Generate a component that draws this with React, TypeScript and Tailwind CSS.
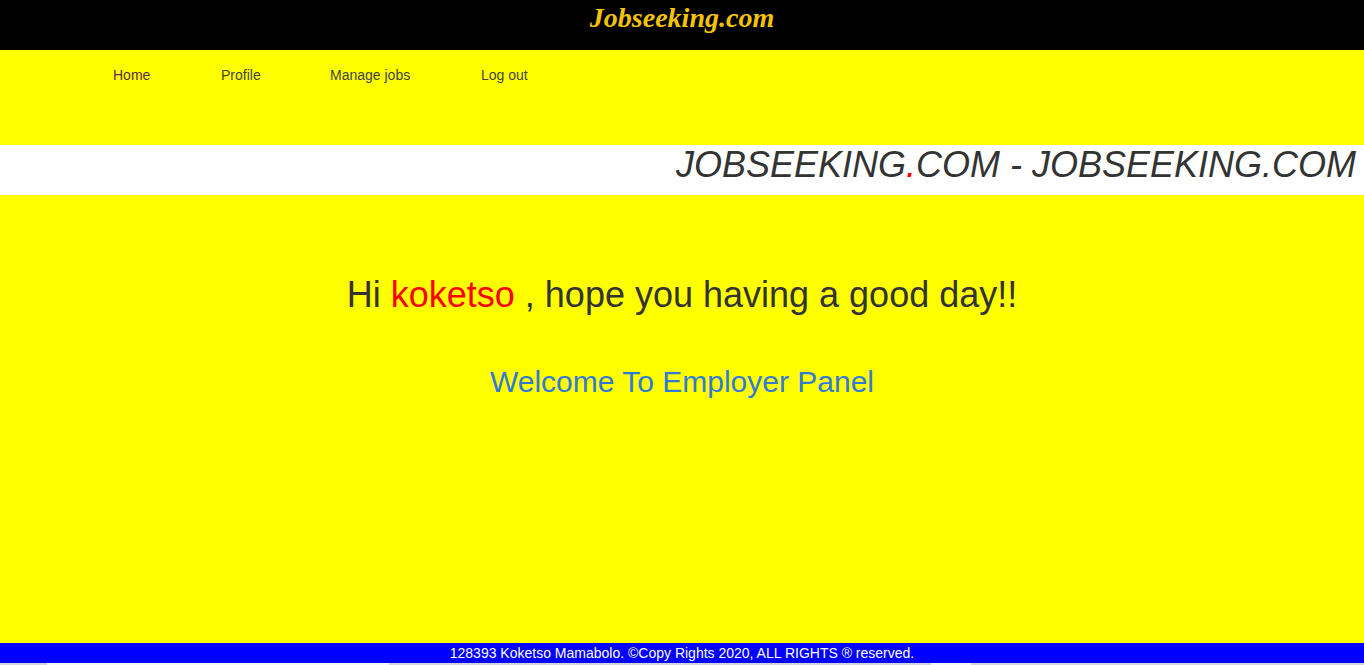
import React from 'react';

const navLinks = [
  { label: 'Home', className: 'text-[#5b2d4c]' },
  { label: 'Profile', className: 'text-[#444]' },
  { label: 'Manage jobs', className: 'text-[#444]' },
  { label: 'Log out', className: 'text-[#444]' },
];

const App: React.FC = () => {
  return (
    <div className="w-full h-[665px] flex flex-col bg-[#ffff00] font-['Liberation_Sans',Arial,sans-serif] overflow-hidden">
      {/* Brand header */}
      <header className="h-[50px] flex-shrink-0 bg-black flex justify-center">
        <h1 className="mt-[1px] text-[28px] leading-[34px] italic font-bold text-[#f5c400] font-['Liberation_Serif','Times_New_Roman',serif]">
          Jobseeking.com
        </h1>
      </header>

      {/* Nav */}
      <nav className="h-[95px] flex-shrink-0 flex items-start pl-[113px] pt-[17px] text-[14px] leading-[16px]">
        {navLinks.map((link, i) => (
          <a
            key={link.label}
            href="#"
            className={`${link.className} ${i === 0 ? 'w-[108px]' : i === 1 ? 'w-[109px]' : i === 2 ? 'w-[151px]' : ''}`}
          >
            {link.label}
          </a>
        ))}
      </nav>

      {/* Marquee strip */}
      <div className="h-[50px] flex-shrink-0 bg-white flex items-start justify-end pt-[0px] pr-[8px] overflow-hidden whitespace-nowrap">
        <span className="text-[36px] leading-[40px] italic text-[#333]">
          JOBSEEKING<span className="text-[#ff0000]">.</span>COM - JOBSEEKING.COM
        </span>
      </div>

      {/* Main */}
      <main className="flex-grow flex flex-col items-center">
        <h2 className="mt-[78px] text-[36px] leading-[44px] text-[#333]">
          Hi <span className="text-[#ff0000]">koketso</span> , hope you having a good day!!
        </h2>
        <h3 className="mt-[47px] text-[30px] leading-[36px] text-[#337ad4]">
          Welcome To Employer Panel
        </h3>
      </main>

      {/* Footer */}
      <footer className="h-[20px] flex-shrink-0 bg-[#0000ff] flex items-center justify-center">
        <p className="text-[14px] leading-[16px] text-white">
          128393 Koketso Mamabolo. ©Copy Rights 2020, ALL RIGHTS ® reserved.
        </p>
      </footer>
      <div className="h-[2px] flex-shrink-0 bg-[#d3d3e0] flex">
        <div className="ml-[47px] w-[342px] bg-[#f4f4f8]" />
        <div className="ml-[542px] w-[40px] bg-[#f4f4f8]" />
      </div>
    </div>
  );
};

export default App;
